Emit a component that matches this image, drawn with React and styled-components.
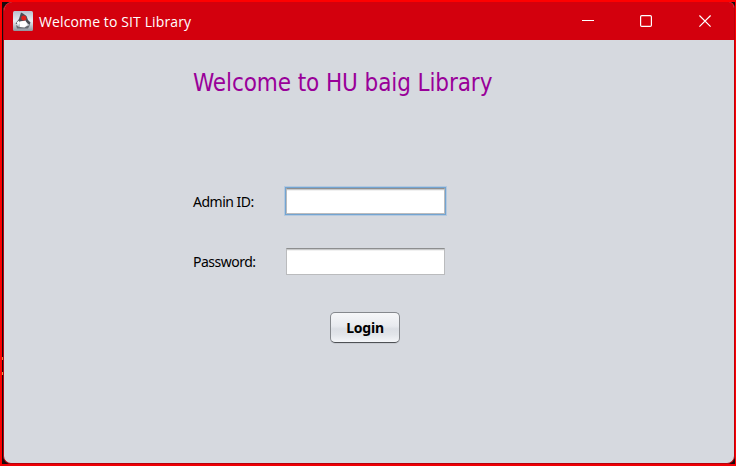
import React from "react";
import styled, { createGlobalStyle } from "styled-components";

const GlobalStyle = createGlobalStyle`
  * { box-sizing: border-box; }
  body { margin: 0; overflow: hidden; }
`;

const Desktop = styled.main`
  width: 736px;
  height: 466px;
  background:
    linear-gradient(#c98a4a, #c98a4a) 0 355px / 1px 3px no-repeat,
    linear-gradient(#d39a50, #d39a50) 0 370px / 1px 3px no-repeat,
    #1a0a0d;
  border: solid #ff0000;
  border-width: 2px 1px 2px 2px;
  border-bottom-color: #ee0005;
`;

const Window = styled.section`
  display: flex;
  flex-direction: column;
  width: 732px;
  height: 462px;
  margin-left: 1px;
  border: solid #b8000d;
  border-width: 0 1px 1px 1px;
  border-radius: 9px 6px 8px 8px;
  overflow: hidden;
  background: #d6d9df;
`;

const TitleBar = styled.header`
  display: flex;
  align-items: center;
  flex: 0 0 38px;
  padding-left: 9px;
  background: #d3000d;
  color: #fff;
`;

const WindowTitle = styled.span`
  flex: 1;
  margin: 1px 0 0 6px;
  font: 14px/20px "Open Sans", sans-serif;
  letter-spacing: 0.12px;
  white-space: nowrap;
`;

const Controls = styled.div`
  display: grid;
  grid-template-columns: 58px 59px 13px;
  margin: 0 22px 0 0;
`;

const ControlButton = styled.button`
  display: block;
  width: 13px;
  height: 13px;
  padding: 0;
  border: 0;
  background: none;
  svg { display: block; }
`;

const Form = styled.form`
  display: flex;
  flex-direction: column;
  align-items: flex-start;
  padding: 27px 0 0 189px;
`;

const Heading = styled.h1`
  margin: 0 0 89px;
  font: 400 24px/32px "DejaVu Sans Condensed", "DejaVu Sans", sans-serif;
  font-stretch: condensed;
  letter-spacing: -0.1px;
  color: #990099;
  white-space: nowrap;
`;

const FieldRow = styled.div`
  display: grid;
  grid-template-columns: 93px 159px;
  height: 60px;
  align-items: start;
`;

const Label = styled.label`
  padding-top: 4px;
  font: 14px/20px "Noto Sans", sans-serif;
  letter-spacing: -0.5px;
  color: #000;
  white-space: nowrap;
`;

const Field = styled.input`
  width: 159px;
  height: ${(p) => (p.$focused ? "26px" : "27px")};
  margin: 0;
  padding: 2px 6px;
  border: 1px solid #babbbd;
  border-top-color: #8d8e8f;
  border-radius: 0;
  outline: 0;
  background: linear-gradient(#c8c9ca 0 1px, #f1f1f1 1px 2px, #fff 2px);
  box-shadow: ${(p) => (p.$focused ? "0 0 0 1px #73a4d1, 0 0 0 2px #b4c9df" : "none")};
`;

const LoginButton = styled.button`
  width: 70px;
  height: 31px;
  margin: 4px 0 0 137px;
  padding: 0;
  border: 1px solid #85888d;
  border-bottom-color: #4e5155;
  border-radius: 5px;
  background: linear-gradient(#f6f7f9, #e8eaef 45%, #dcdfe5 55%, #e2e5ea 75%, #f4f6f9);
  box-shadow: 0 1px 0 #c8cbd1;
  color: #000;
  font: 700 14px/29px "Noto Sans", sans-serif;
  letter-spacing: -0.2px;
`;

const AppIcon = () => (
  <svg width="20" height="20" viewBox="0 0 20 20" aria-hidden="true">
    <defs>
      <linearGradient id="tile" x2="0" y2="1">
        <stop stopColor="#b9c1ce" />
        <stop offset=".5" stopColor="#e8edf2" />
        <stop offset="1" stopColor="#8f959d" />
      </linearGradient>
      <filter id="soften"><feGaussianBlur stdDeviation=".45" /></filter>
    </defs>
    <rect width="20" height="20" rx="1.5" fill="url(#tile)" />
    <g filter="url(#soften)">
      <path d="M8 1.5 L10 2.5 L13.5 5 L15 9 L17.5 11.5 L16.5 14 L13 11 L8 10.5 L4 13 L2.5 12.5 L6 8 Z" fill="#4a4e54" />
      <path d="M3 14 L6 16 L13 15.5 L17 14 L15 17.5 L4 17.5 Z" fill="#666b72" />
      <path d="M7 10.5 L12.5 9.5 L14.5 14 L11.5 16.5 L7 16 Z" fill="#fff" />
      <ellipse cx="10.8" cy="7" rx="2.6" ry="2.5" fill="#e0201e" />
      <path d="M3.5 11.5 L6 9.5 L7 12 L5 14 Z" fill="#f5f7f8" />
    </g>
  </svg>
);

export default function App() {
  return (
    <>
      <GlobalStyle />
      <Desktop>
        <Window>
          <TitleBar>
            <AppIcon />
            <WindowTitle>Welcome to SIT Library</WindowTitle>
            <Controls>
              <ControlButton aria-label="Minimize">
                <svg width="13" height="13"><path d="M0 5.5H12" stroke="#fff" /></svg>
              </ControlButton>
              <ControlButton aria-label="Maximize">
                <svg width="13" height="13"><rect x=".6" y=".6" width="10.8" height="10.8" rx="1.2" fill="none" stroke="#fff" strokeWidth="1.2" /></svg>
              </ControlButton>
              <ControlButton aria-label="Close">
                <svg width="13" height="13"><path d="M.4 .5L11.6 11.7M11.6 .5L.4 11.7" stroke="#fff" strokeWidth="1.2" /></svg>
              </ControlButton>
            </Controls>
          </TitleBar>
          <Form onSubmit={(e) => e.preventDefault()}>
            <Heading>Welcome to HU baig Library</Heading>
            <FieldRow>
              <Label htmlFor="admin">Admin ID:</Label>
              <Field id="admin" $focused />
            </FieldRow>
            <FieldRow>
              <Label htmlFor="password">Password:</Label>
              <Field id="password" type="password" />
            </FieldRow>
            <LoginButton>Login</LoginButton>
          </Form>
        </Window>
      </Desktop>
    </>
  );
}
